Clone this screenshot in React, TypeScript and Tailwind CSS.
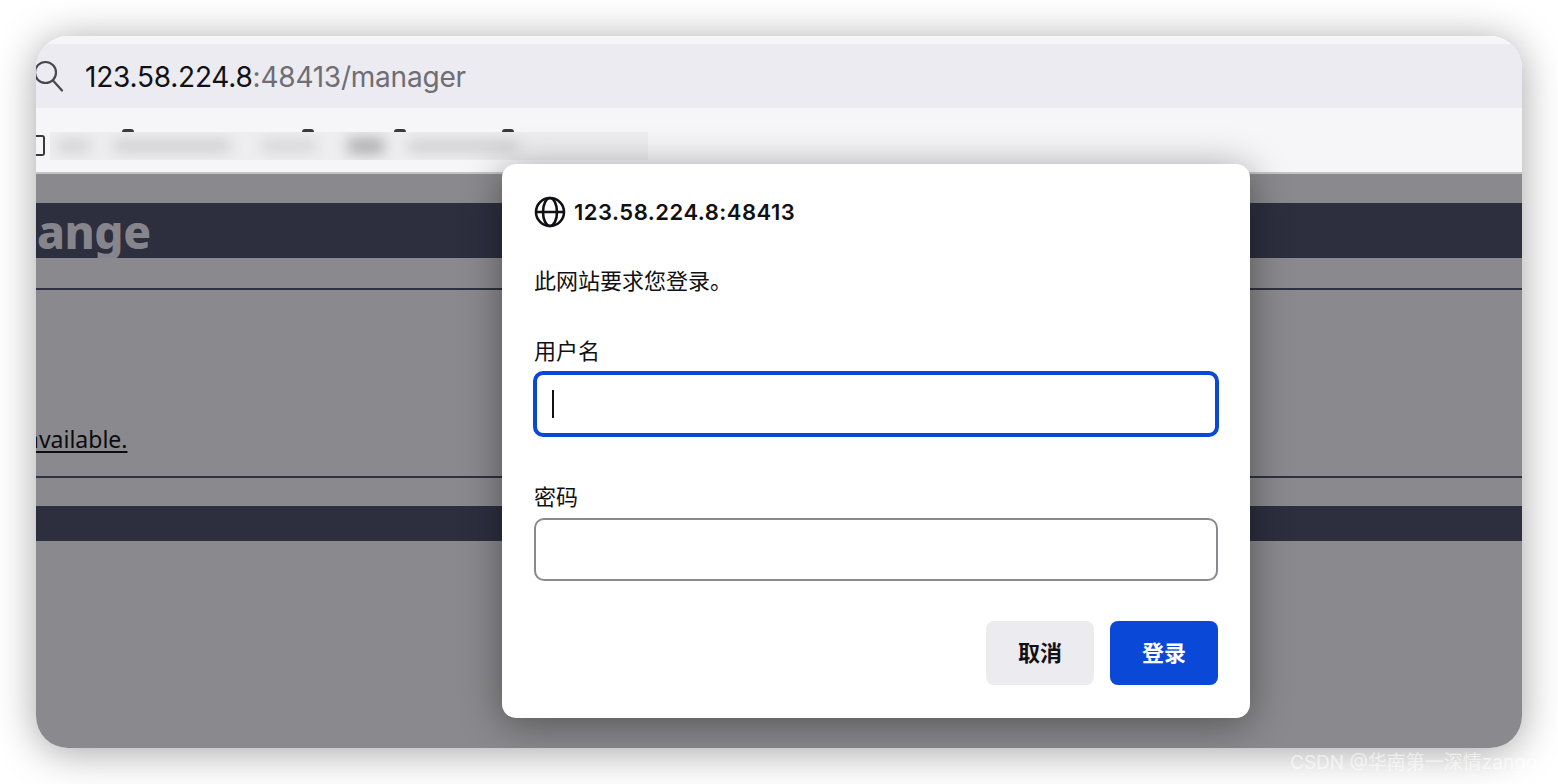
import React from 'react'

const sans = "font-['Inter','Noto_Sans_CJK_SC',sans-serif]"

function SearchGlyph() {
  return (
    <svg width="32" height="32" viewBox="0 0 32 32" fill="none" stroke="#46464b" strokeWidth="2.2" strokeLinecap="round" className="shrink-0 ml-[-4px]">
      <circle cx="13.5" cy="12.5" r="10.5" />
      <path d="M21 20.5l9 10" />
    </svg>
  )
}

function Globe() {
  return (
    <svg width="32" height="32" viewBox="0 0 32 32" fill="none" stroke="#111114" strokeWidth="2.6" className="shrink-0">
      <circle cx="16" cy="16" r="14" />
      <ellipse cx="16" cy="16" rx="7" ry="14" />
      <path d="M2.5 16h27" />
    </svg>
  )
}

function BookmarksBar() {
  return (
    <div className="h-16 shrink-0 bg-[#f6f6f9] flex items-start relative">
      <div className="mt-[27px] w-[9px] h-[21px] border-2 border-l-0 border-[#3a3a3e] rounded-r-[3px] shrink-0" />
      <div className="ml-[5px] mt-6 w-[598px] h-7 bg-[#eeeef0] overflow-hidden flex items-center gap-6 px-2">
        <div className="w-8 h-3 bg-[#cfcfd2] blur-[7px]" />
        <div className="w-[116px] h-3 bg-[#cdcdd0] blur-[7px]" />
        <div className="w-[54px] h-3 bg-[#d4d4d7] blur-[7px] ml-2" />
        <div className="w-9 h-4 bg-[#aeaeb2] blur-[7px] ml-2" />
        <div className="w-[110px] h-3 bg-[#cdcdd0] blur-[7px]" />
      </div>
      {/* tops of the icons poking out above the blur */}
      <span className="absolute left-[86px] top-[21px] w-3 h-[3px] rounded-t-full bg-[#3a3a3e]" />
      <span className="absolute left-[266px] top-[21px] w-3 h-[3px] rounded-t-full bg-[#3a3a3e]" />
      <span className="absolute left-[358px] top-[21px] w-3 h-[3px] rounded-t-full bg-[#3a3a3e]" />
      <span className="absolute left-[466px] top-[21px] w-3 h-[3px] rounded-t-full bg-[#3a3a3e]" />
    </div>
  )
}

function PageBehind() {
  return (
    <div className="flex-1 bg-[#8a898d] overflow-hidden pt-[29px]">
      <div className="h-[55px] bg-[#2d2f3f] flex items-center overflow-hidden whitespace-nowrap">
        <span className="ml-[-58px] text-[46px] leading-none font-extrabold tracking-[-0.5px] text-[#86858c] font-['Noto_Sans',sans-serif]">
          Change
        </span>
      </div>
      <div className="mt-[30px] h-0.5 bg-[#2f3142]" />
      <div className="mt-[137px] h-8 overflow-hidden whitespace-nowrap">
        <span className="ml-[-10px] text-[23px] leading-6 text-[#0c0c10] underline underline-offset-[3px] decoration-2 font-['Noto_Sans',sans-serif]">
          available.
        </span>
      </div>
      <div className="mt-[17px] h-0.5 bg-[#2f3142]" />
      <div className="mt-7 h-[35px] bg-[#2d2f3f]" />
    </div>
  )
}

function LoginDialog() {
  return (
    <div className={`absolute left-[466px] top-[128px] w-[748px] h-[554px] bg-white rounded-[14px] shadow-[0_6px_40px_rgba(0,0,0,0.4)] pl-8 pr-8 pt-[32px] ${sans}`}>
      <div className="flex items-center gap-2 h-8 text-[#111114]">
        <Globe />
        <span className="text-[22px] leading-none font-semibold tracking-[0.5px]">123.58.224.8:48413</span>
      </div>
      <p className="mt-[39px] text-[22px] leading-[28px] text-[#111114]">此网站要求您登录。</p>
      <label className="block mt-[42px] text-[22px] leading-[28px] text-[#111114]">用户名</label>
      <div className="mt-[6px] ml-[-1px] h-[66px] w-[686px] border-4 border-[#0a49d8] rounded-[10px] flex items-center pl-[15px]">
        <span className="w-0.5 h-7 bg-[#111114]" />
      </div>
      <label className="block mt-[46px] text-[22px] leading-[28px] text-[#111114]">密码</label>
      <div className="mt-[7px] h-[63px] w-[684px] border-2 border-[#8a898d] rounded-[10px]" />
      <div className="mt-[40px] flex justify-end gap-4 w-[684px]">
        <button className="w-[108px] h-16 rounded-lg bg-[#ecebf0] text-[22px] font-bold text-[#111114] pt-px">取消</button>
        <button className="w-[108px] h-16 rounded-lg bg-[#0a49d8] text-[22px] font-bold text-white">登录</button>
      </div>
    </div>
  )
}

export default function App() {
  return (
    <div className="w-[1558px] h-[784px] bg-white overflow-hidden relative pl-9 pt-9">
      <div className="relative w-[1486px] h-[712px] rounded-[32px] overflow-hidden flex flex-col shadow-[0_4px_40px_rgba(0,0,0,0.36)]">
        <div className="h-2 shrink-0 bg-[#f6f6f9]" />
        <div className={`h-16 shrink-0 bg-[#ecebf1] flex items-center ${sans}`}>
          <SearchGlyph />
          <span className="ml-[21px] pt-0.5 text-[28px] leading-none tracking-[-0.22px] text-[#111114]">
            123.58.224.8<span className="text-[#6e6e73]">:48413/manager</span>
          </span>
        </div>
        <BookmarksBar />
        <div className="h-0.5 shrink-0 bg-[#c4c4c6]" />
        <PageBehind />
        <LoginDialog />
      </div>
      <span className={`absolute left-[1290px] top-[751px] text-[19px] leading-6 text-white/55 whitespace-nowrap ${sans}`}>
        CSDN @华南第一深情zango
      </span>
    </div>
  )
}
